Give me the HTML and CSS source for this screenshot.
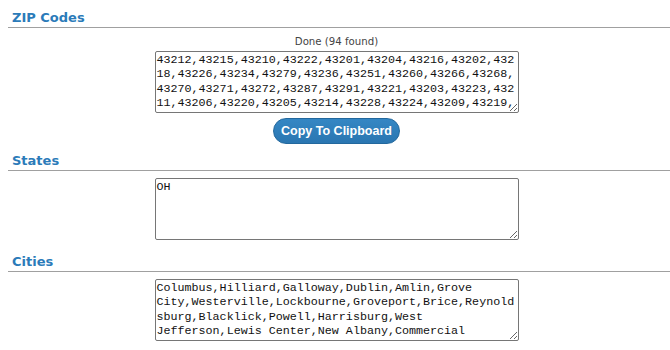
FILE: index.html
```html
<!DOCTYPE html>
<html lang="en">
<head>
    <meta charset="UTF-8">
    <meta name="viewport" content="width=device-width, initial-scale=1.0">
    <title>ZIP Code Lookup</title>
    <link rel="stylesheet" href="styles.css">
</head>
<body>
    <!-- ZIP Codes -->
    <div class="section section-zip">
        <h2 class="section-title">ZIP Codes</h2>
        <div class="section-body">
            <div class="status">Done (94 found)</div>
            <textarea class="result-box" rows="4">43212,43215,43210,43222,43201,43204,43216,43202,43218,43226,43234,43279,43236,43251,43260,43266,43268,43270,43271,43272,43287,43291,43221,43203,43223,43211,43206,43220,43205,43214,43228,43224,43209,43219,43207,43213,43217,43227,43229,43230,43231,43232,43235,43240,43026,43004,43016,43017,43054,43068,43081,43082,43085,43110,43119,43123,43125,43137,43147</textarea>
            <button class="copy-button">Copy To Clipboard</button>
        </div>
    </div>

    <!-- States -->
    <div class="section">
        <h2 class="section-title">States</h2>
        <div class="section-body">
            <textarea class="result-box" rows="4">OH</textarea>
        </div>
    </div>

    <!-- Cities -->
    <div class="section">
        <h2 class="section-title">Cities</h2>
        <div class="section-body">
            <textarea class="result-box" rows="4">Columbus,Hilliard,Galloway,Dublin,Amlin,Grove City,Westerville,Lockbourne,Groveport,Brice,Reynoldsburg,Blacklick,Powell,Harrisburg,West Jefferson,Lewis Center,New Albany,Commercial Point,Canal Winchester,Worthington,Plain City,Ashville,Orient</textarea>
        </div>
    </div>
</body>
</html>
```

FILE: styles.css
```css
/* Reset */
body, html {
    margin: 0;
    padding: 0;
    background-color: #fff;
    color: #222;
    font-family: "DejaVu Sans", Verdana, sans-serif;
}

body {
    padding: 8px 0 0 8px;
    overflow: hidden;
}

/* Sections */
.section {
    padding-bottom: 12px;
}

.section-zip {
    padding-bottom: 7px;
}

.section-title {
    margin: 0;
    padding: 2px 0 1px 4px;
    font-size: 13px;
    line-height: 16px;
    font-weight: bold;
    color: #2b7bb9;
    border-bottom: 1px solid #a0a0a0;
}

.section-body {
    display: flex;
    flex-direction: column;
    align-items: center;
    padding: 7px 5px 0 0;
}

/* Status line */
.status {
    font-size: 10.2px;
    line-height: 14px;
    color: #444;
    margin-bottom: 2px;
}

/* Result Textareas */
.result-box {
    box-sizing: border-box;
    width: 364px;
    height: 62px;
    margin: 0;
    padding: 1px;
    font-family: "Liberation Mono", "Courier New", monospace;
    font-size: 11.7px;
    line-height: 14.3px;
    color: #111;
    border: 1px solid #767676;
    border-radius: 2px;
    overflow: hidden;
}

/* Copy Button */
.copy-button {
    margin-top: 5px;
    height: 26px;
    padding: 0 7px;
    font-family: "Liberation Sans", Arial, sans-serif;
    font-size: 12.5px;
    font-weight: bold;
    color: #fff;
    background: linear-gradient(#3587c4, #2a76b1);
    border: 1px solid #23689d;
    border-radius: 13px;
    cursor: pointer;
}

.copy-button:hover {
    background: #3b8fcc;
}
```
